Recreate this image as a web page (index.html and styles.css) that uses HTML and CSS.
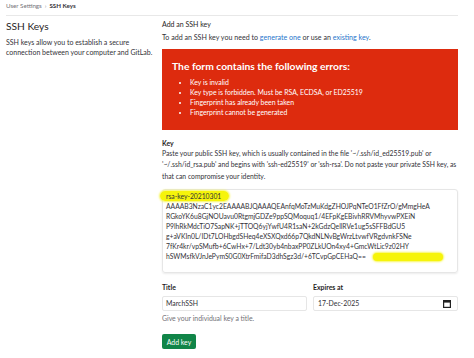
FILE: index.html
```html
<!DOCTYPE html>
<html>
<head>
<meta charset="utf-8">
<link rel="stylesheet" href="styles.css">
</head>
<body>
<div class="page">
  <div class="crumbs">
    <span class="crumb">User Settings</span>
    <span class="sep">›</span>
    <span class="crumb current">SSH Keys</span>
  </div>
  <div class="layout">
    <aside class="side">
      <h1 class="title">SSH Keys</h1>
      <p class="desc">SSH keys allow you to establish a secure connection between your computer and GitLab.</p>
    </aside>
    <main class="main">
      <h2 class="sub">Add an SSH key</h2>
      <p class="intro">To add an SSH key you need to <a class="link">generate one</a> or use an <a class="link">existing key</a>.</p>
      <div class="alert">
        <h3 class="alert-title">The form contains the following errors:</h3>
        <ul class="errors">
          <li>Key is invalid</li>
          <li>Key type is forbidden. Must be RSA, ECDSA, or ED25519</li>
          <li>Fingerprint has already been taken</li>
          <li>Fingerprint cannot be generated</li>
        </ul>
      </div>
      <div class="label key-label">Key</div>
      <p class="help-key">Paste your public SSH key, which is usually contained in the file '~/.ssh/id_ed25519.pub' or<br>'~/.ssh/id_rsa.pub' and begins with 'ssh-ed25519' or 'ssh-rsa'. Do not paste your private SSH key, as<br>that can compromise your identity.</p>
      <div class="keybox">
        <div class="kline"><span class="hl hl1">rsa-key-20210301</span></div>
        <div class="kline">AAAAB3NzaC1yc2EAAAABJQAAAQEAnfqMoTzMuKdgZHOJPqNTeO1FfZrO/gMmgHeA</div>
        <div class="kline">RGkoYK6u8GjNOUavu0RtgmjGDZe9ppSQMoquq1/4EFpKgEBivhRRVMhyvwPXEiN</div>
        <div class="kline">P9lhRkMdcTiO7SapNK+jTTOQ6yjYwfU4R1saN+2kGdzQellRVe1ug5sSFFBdGU5</div>
        <div class="kline">g+aVKIn0L/IDt7LOHbgdSHeq4eXSXQxd66p7QkdNLNvBgWrzLtvwfVRgdvnkFSNe</div>
        <div class="kline">7fKr4kr/vpSMufb+6CwHx+7/Ldt30yb4nbaxPP0ZLkUOn4xy4+GmcWtLic9z02HY</div>
        <div class="kline">hSWMsfkVJnJePymS0G0XtrFmifaD3dhSgz3d/+6TCvpGpCEHaQ== <span class="hl hl2"></span></div>
      </div>
      <div class="row">
        <div class="field">
          <div class="label">Title</div>
          <div class="input">MarchSSH</div>
        </div>
        <div class="field">
          <div class="label">Expires at</div>
          <div class="input date">
            <span>17-Dec-2025</span>
            <svg class="cal" width="8" height="8" viewBox="0 0 8 8"><rect x="0.6" y="0.6" width="6.8" height="6.8" fill="none" stroke="#222" stroke-width="1.2"/><rect x="0.6" y="0.6" width="6.8" height="2" fill="#222"/></svg>
          </div>
        </div>
      </div>
      <div class="hint">Give your individual key a title.</div>
      <button class="btn">Add key</button>
    </main>
  </div>
</div>
</body>
</html>
```
FILE: styles.css
```css
* { box-sizing: border-box; }
html, body { margin: 0; padding: 0; background: #fff; }
body {
  font-family: Lato, "Open Sans", sans-serif;
  color: #333238;
  width: 474px;
  height: 358px;
  overflow: hidden;
}
.page { padding-left: 6px; width: 458px; }
.crumbs {
  height: 16px;
  border-bottom: 1px solid #e8e8e8;
  display: flex;
  align-items: center;
  gap: 3px;
  font-size: 6.2px;
  color: #737278;
  padding-bottom: 5px;
}
.crumbs .sep { font-size: 6px; color: #999; }
.crumbs .current { color: #333238; font-weight: 700; }
.layout { display: flex; }
.side { width: 156px; padding-top: 3px; }
.title { margin: 0; font-size: 10.2px; font-weight: 400; line-height: 14px; color: #1f1e24; }
.desc { margin: 4px 0 0; font-size: 7px; line-height: 10px; color: #333238; }
.main { flex: 1; padding-top: 3px; }
.sub { margin: 0; font-size: 7px; font-weight: 400; line-height: 10px; color: #1f1e24; }
.intro { margin: 3.5px 0 0; font-size: 7.1px; line-height: 10px; }
.link { color: #1f75cb; text-decoration: none; }
.alert {
  margin-top: 6.5px;
  background: #dd2b0e;
  color: #fff;
  height: 81px;
  padding: 10px 10px 0;
}
.alert-title { margin: 0; font-size: 10.3px; font-weight: 700; line-height: 14px; }
.errors { margin: 4px 0 0; padding-left: 18px; font-size: 6.9px; line-height: 10px; }
.label { font-size: 6.9px; font-weight: 700; line-height: 10px; color: #1f1e24; }
.key-label { margin-top: 8.5px; line-height: 9px; }
.help-key { margin: 0; font-size: 6.8px; line-height: 11.5px; white-space: nowrap; }
.keybox {
  margin-top: 7px;
  height: 84px;
  border: 1px solid #e6e6e6;
  border-radius: 3px;
  box-shadow: 0 1px 2px rgba(0,0,0,0.08);
  padding: 1px 0 0 3px;
  font-size: 6.75px;
  line-height: 10px;
  white-space: nowrap;
}
.hl {
  background: #f6f40a;
  border-radius: 5px;
  box-shadow: 0 0 2px 1px #f8f65a;
}
.hl1 { margin-left: -6px; padding: 1px 8px 1px 6px; }
.hl2 { display: inline-block; width: 70px; height: 8px; vertical-align: middle; margin-left: 5px; }
.row { display: flex; gap: 6px; }
.row .field { flex: 1; }
.row .label { margin-top: 9px; }
.input {
  margin-top: 4px;
  height: 15px;
  border: 1px solid #e6e6e6;
  border-radius: 2px;
  font-size: 6.9px;
  line-height: 13px;
  padding-left: 3px;
  color: #333238;
}
.date { display: flex; justify-content: space-between; align-items: center; padding-left: 4px; padding-right: 6px; }
.cal { display: block; }
.hint { margin-top: 2px; font-size: 6.9px; line-height: 10px; color: #737278; }
.btn {
  margin-top: 11px;
  display: block;
  height: 15px;
  width: 34px;
  border: none;
  border-radius: 2px;
  background: #108548;
  color: #fff;
  font-family: inherit;
  font-size: 6.9px;
  padding: 0;
}
```
